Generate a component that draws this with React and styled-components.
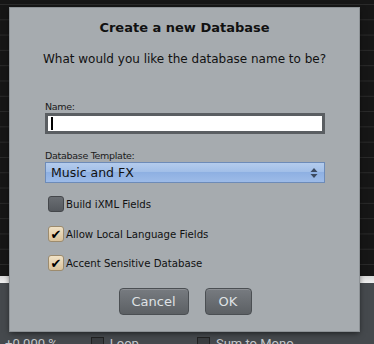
import React from 'react';
import styled, { createGlobalStyle } from 'styled-components';

const GlobalStyle = createGlobalStyle`
  html, body {
    margin: 0;
    padding: 0;
    background: #151515;
  }
  body {
    font-family: "DejaVu Sans", "Liberation Sans", sans-serif;
  }
`;

const Screen = styled.div`
  position: relative;
  width: 374px;
  height: 344px;
  overflow: hidden;
  background: #151515;
  display: flex;
  flex-direction: column;
`;

const Canvas = styled.div`
  height: 276px;
  background-color: #161616;
  background-image: linear-gradient(to bottom, #2a2a2a 0px, #2a2a2a 1px, transparent 1px);
  background-size: 100% 15.3px;
  background-position: 0 4px;
`;

const Strip = styled.div`
  height: 7px;
  background: linear-gradient(#d8d8d8, #f0f0f0);
`;

const Toolbar = styled.div`
  flex: 1;
  background: #45494d;
  display: flex;
  align-items: flex-end;
  padding-left: 5px;
  color: #c3c7cb;
  font-family: Roboto, "DejaVu Sans", sans-serif;
  font-size: 13px;
`;

const ToolItem = styled.div`
  display: flex;
  align-items: center;
  gap: 6px;
  margin-bottom: -7px;
  margin-left: ${(p) => p.$offset || 0}px;
`;

const ToolBox = styled.span`
  width: 11px;
  height: 11px;
  border: 1px solid #222;
  background: #3a3d40;
  display: inline-block;
`;

const Dialog = styled.div`
  position: absolute;
  left: 10px;
  top: 8px;
  width: 349px;
  height: 323px;
  box-sizing: border-box;
  background: #a6abaf;
  box-shadow: 0 0 0 1px #8d9296, 0 2px 6px rgba(0, 0, 0, 0.6);
  display: flex;
  flex-direction: column;
  padding-top: 12px;
  color: #111;
`;

const Title = styled.div`
  font-weight: bold;
  font-size: 13px;
  line-height: 16px;
  text-align: center;
`;

const Prompt = styled.div`
  margin-top: 15px;
  font-size: 12px;
  line-height: 16px;
  text-align: center;
  white-space: nowrap;
`;

const Form = styled.div`
  display: flex;
  flex-direction: column;
  padding: 0 34px 0 35px;
`;

const Label = styled.div`
  margin-top: ${(p) => p.$top}px;
  font-size: 9.5px;
  letter-spacing: -0.3px;
  line-height: 13px;
  color: #1a1a1a;
`;

const NameInput = styled.div`
  height: 21px;
  box-sizing: border-box;
  border: 3px solid #5a5e62;
  background: #fff;
  display: flex;
  align-items: center;
  padding-left: 3px;
`;

const Caret = styled.span`
  width: 2px;
  height: 13px;
  background: #000;
`;

const Select = styled.div`
  height: 21px;
  box-sizing: border-box;
  border: 1px solid #6d8bb8;
  background: linear-gradient(#b4ccec 0%, #a2bfe8 45%, #8eb0e2 50%, #9dbbe8 100%);
  display: flex;
  align-items: center;
  justify-content: space-between;
  padding: 0 6px 0 5px;
  font-size: 12.5px;
  color: #111;
`;

const Arrows = styled.svg`
  width: 8px;
  height: 12px;
`;

const CheckRow = styled.div`
  margin-top: ${(p) => p.$top}px;
  margin-left: 3px;
  height: 16px;
  display: flex;
  align-items: center;
  gap: 2px;
  font-size: 10.2px;
  color: #111;
`;

const Box = styled.span`
  width: 16px;
  height: 16px;
  box-sizing: border-box;
  border-radius: 3px;
  display: flex;
  align-items: center;
  justify-content: center;
  font-size: 13px;
  line-height: 1;
  color: #000;
  background: ${(p) =>
    p.$checked
      ? 'linear-gradient(#f1e2c6, #d9c29c)'
      : 'linear-gradient(#6a6e73, #55595e)'};
  border: 1px solid ${(p) => (p.$checked ? '#9c8b6e' : '#44474b')};
`;

const Buttons = styled.div`
  margin-top: 17px;
  display: flex;
  justify-content: center;
  gap: 16px;
  padding-left: 1px;
`;

const Button = styled.div`
  width: ${(p) => p.$w}px;
  height: 27px;
  box-sizing: border-box;
  border-radius: 4px;
  border: 1px solid #4b4f53;
  background: linear-gradient(#777b80, #5c6064);
  color: #dfe2e5;
  font-size: 13px;
  display: flex;
  align-items: center;
  justify-content: center;
  box-shadow: inset 0 1px 0 rgba(255, 255, 255, 0.15);
`;

function Check({ checked, children, top }) {
  return (
    <CheckRow $top={top}>
      <Box $checked={checked}>{checked ? '✔' : ''}</Box>
      {children}
    </CheckRow>
  );
}

export default function App() {
  return (
    <Screen>
      <GlobalStyle />
      <Canvas />
      <Strip />
      <Toolbar>
        <ToolItem>+0.000 %</ToolItem>
        <ToolItem $offset={33}>
          <ToolBox />
          Loop
        </ToolItem>
        <ToolItem $offset={58}>
          <ToolBox />
          Sum to Mono
        </ToolItem>
      </Toolbar>

      <Dialog>
        <Title>Create a new Database</Title>
        <Prompt>What would you like the database name to be?</Prompt>
        <Form>
          <Label $top={33}>Name:</Label>
          <NameInput>
            <Caret />
          </NameInput>
          <Label $top={15}>Database Template:</Label>
          <Select>
            Music and FX
            <Arrows viewBox="0 0 8 12">
              <path d="M4 1 L7.5 5 L0.5 5 Z" fill="#3c4a60" />
              <path d="M4 11 L7.5 7 L0.5 7 Z" fill="#3c4a60" />
            </Arrows>
          </Select>
          <Check top={13}>Build iXML Fields</Check>
          <Check top={14} checked>
            Allow Local Language Fields
          </Check>
          <Check top={13} checked>
            Accent Sensitive Database
          </Check>
        </Form>
        <Buttons>
          <Button $w={70}>Cancel</Button>
          <Button $w={47}>OK</Button>
        </Buttons>
      </Dialog>
    </Screen>
  );
}
